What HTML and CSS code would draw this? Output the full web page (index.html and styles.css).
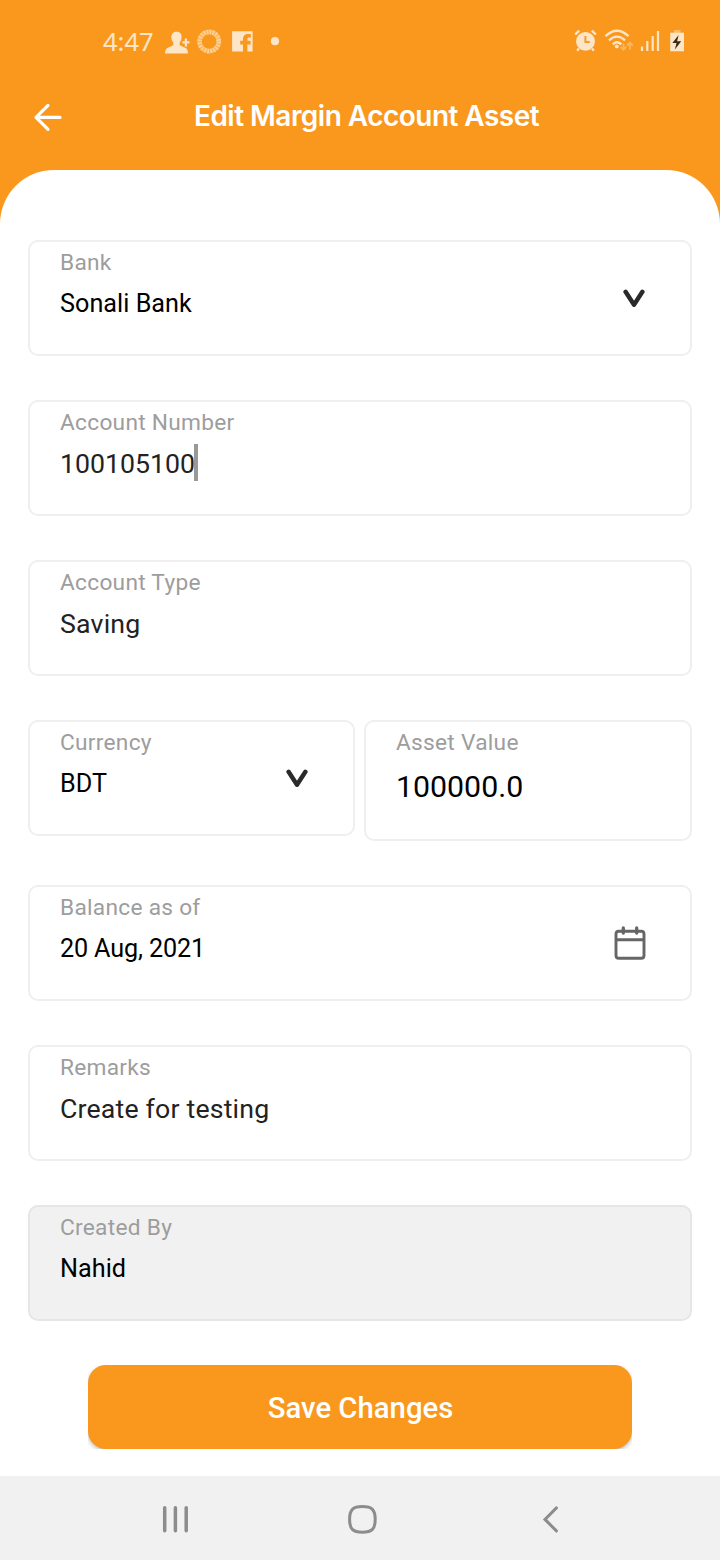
FILE: index.html
```html
<!DOCTYPE html>
<html lang="en">
<head>
<meta charset="utf-8">
<title>Edit Margin Account Asset</title>
<link rel="stylesheet" href="styles.css">
</head>
<body>
<div class="screen">
  <div class="status">
    <span class="clock">4:47</span>
    <svg class="status-left" width="126" height="36" viewBox="0 0 126 36">
      <g fill="#fde5c8">
        <path d="M11.500 7.800c3.800 0 5.500 2.600 5 6.400-.2 2-1 3.300-1.800 4.300v2.700l5.500 2.600c2 .9 2.600 2.300 2.800 5.600H0c.2-3.300.9-4.700 2.800-5.600l5.500-2.600v-2.700c-.9-1-1.600-2.300-1.800-4.300-.4-3.800 1.200-6.400 5-6.400z"/>
        <path d="M19.800 14.600h2.200v2.700h2.400v2.200H22v2.900h-2.200v-2.900h-2.400v-2.200h2.400z"/>
        <path fill-rule="evenodd" d="M67.100 7.300h20.500v20.300h-5.200v-7h3.200v-3.900h-3.200v-1.500c0-1.300.5-1.800 1.700-1.800h1.800V9.900h-3c-3 0-4.900 1.800-4.900 4.700v2.100h-2.800v3.900h2.800v7H67.100z"/>
        <circle cx="110" cy="17.200" r="4.100"/>
      </g>
      <circle cx="44.200" cy="17.500" r="9.600" fill="none" stroke="#fbb254" stroke-width="4.600"/>
      <circle cx="44.200" cy="17.500" r="9.600" fill="none" stroke="#fdd096" stroke-width="4.600" stroke-dasharray="1.900 1.116"/>
    </svg>
    <svg class="status-right" width="114" height="36" viewBox="572 24 114 36">
      <circle cx="585.500" cy="41.400" r="9.400" fill="#fde5c8"/>
      <path d="M575.200 34.500l4-3.800M591.800 30.700l4 3.800M579 48.500l-1.800 2.200M592 48.500l1.800 2.200" stroke="#fde5c8" stroke-width="2.400" fill="none"/>
      <path d="M585.400 36v6h4.400" stroke="#f99a2a" stroke-width="2" fill="none"/>
      <g fill="none" stroke="#fde5c8" stroke-width="2.300">
        <path d="M605.500 36.200q11.500-11 23 0M609 40.400q8-7.600 16 0M612.700 44.300q4.300-4 8.600 0"/>
      </g>
      <circle cx="616.800" cy="46.400" r="1.900" fill="#fde5c8"/>
      <path d="M623.500 43.500v6M620.700 46.900l2.800 2.900 2.800-2.900M630 49.500v-6.500M627.200 45.500l2.800-2.900 2.800 2.900" fill="none" stroke="#fcb560" stroke-width="1.800"/>
      <path d="M642 46.500v4.500M647.300 45v6M647.300 45v-4M652.700 36v15M658 31v20" stroke="#fde5c8" stroke-width="2.200" fill="none"/>
      <path d="M674 30h6.500v3H674z" fill="#fcbb68"/>
      <path d="M670.200 32.700H684v18.600h-13.800z" fill="#fde5c8"/>
      <path d="M678.600 35l-6.200 8h4.100l-1.600 6.400 6.300-8.200h-4.100z" fill="#3f2b12"/>
    </svg>
  </div>
  <header class="appbar">
    <svg class="back" width="30" height="30" viewBox="0 0 30 30"><path d="M16 3.400L4 15.400l12 12M4 15.400h24" fill="none" stroke="#fff" stroke-width="3.200" stroke-linecap="round" stroke-linejoin="round"/></svg>
    <h1 class="title">Edit Margin Account Asset</h1>
  </header>
  <main class="sheet">
    <section class="card">
      <div class="text"><div class="label">Bank</div><div class="value">Sonali Bank</div></div>
      <svg class="chev" width="24" height="20" viewBox="0 0 24 20"><path d="M3.600 2.800L12 15.800 20.400 2.800" fill="none" stroke="#2a2a2a" stroke-width="4.400" stroke-linecap="round" stroke-linejoin="round"/></svg>
    </section>
    <section class="card">
      <div class="text"><div class="label">Account Number</div><div class="value input number">100105100<i class="caret"></i></div></div>
    </section>
    <section class="card">
      <div class="text"><div class="label">Account Type</div><div class="value input">Saving</div></div>
    </section>
    <div class="row">
      <section class="card">
        <div class="text"><div class="label">Currency</div><div class="value">BDT</div></div>
        <svg class="chev" width="24" height="20" viewBox="0 0 24 20"><path d="M3.600 2.800L12 15.800 20.400 2.800" fill="none" stroke="#2a2a2a" stroke-width="4.400" stroke-linecap="round" stroke-linejoin="round"/></svg>
      </section>
      <section class="card tall">
        <div class="text"><div class="label">Asset Value</div><div class="value amount">100000.0</div></div>
      </section>
    </div>
    <section class="card">
      <div class="text"><div class="label">Balance as of</div><div class="value date">20 Aug, 2021</div></div>
      <svg class="cal" width="32" height="36" viewBox="0 0 32 36"><path d="M4.800 6.200h22.400q2.800 0 2.800 2.800v21.500q0 2.800-2.800 2.800H4.800Q2 33.300 2 30.500V9q0-2.800 2.800-2.800zM2 14.800h28" fill="none" stroke="#666" stroke-width="2.900"/><path d="M9.300 3v5M22.700 3v5" stroke="#666" stroke-width="3.300" stroke-linecap="round"/></svg>
    </section>
    <section class="card">
      <div class="text"><div class="label">Remarks</div><div class="value input">Create for testing</div></div>
    </section>
    <section class="card disabled">
      <div class="text"><div class="label">Created By</div><div class="value">Nahid</div></div>
    </section>
    <div class="save-wrap"><button class="save">Save Changes</button></div>
  </main>
  <nav class="nav">
    <svg width="28" height="28" viewBox="0 0 28 28"><path d="M3.700 2.800v23M14.400 2.800v23M25.200 2.800v23" stroke="#8c8c8c" stroke-width="3.500" stroke-linecap="round"/></svg>
    <svg class="home" width="30" height="30" viewBox="0 0 30 30"><path d="M15.400 2.600c9.600 0 12.800 3.200 12.800 12.800S25 28.200 15.400 28.200 2.600 25 2.600 15.400 5.800 2.600 15.400 2.600z" fill="none" stroke="#8c8c8c" stroke-width="3"/></svg>
    <svg width="18" height="28" viewBox="0 0 18 28"><path d="M15.400 2.900L4 14.400l11.400 11.500" fill="none" stroke="#8c8c8c" stroke-width="3" stroke-linecap="round"/></svg>
  </nav>
</div>
</body>
</html>
```
FILE: styles.css
```css
* { box-sizing: border-box; }
body { margin: 0; font-family: Roboto, "Liberation Sans", sans-serif; }
.screen { width: 720px; height: 1560px; display: flex; flex-direction: column; background: #fa981d; overflow: hidden; }
.status { height: 84px; display: flex; align-items: flex-start; padding: 24px 34px 0 103px; color: #fde5c8; }
.clock { width: 62px; margin-top: -1px; font-family: "Noto Sans", sans-serif; font-size: 25.5px; line-height: 36px; white-space: nowrap; }
.status-right { margin-left: auto; }
.appbar { height: 86px; display: flex; align-items: flex-start; padding: 16px 0 0 32px; }
.back { margin-top: 2px; }
.title { margin: 0 0 0 132px; font-family: Inter, sans-serif; font-size: 28px; line-height: 32px; font-weight: 600; letter-spacing: -0.53px; color: #fff; white-space: nowrap; }
.sheet { flex: 1; background: #fff; border-radius: 54px 54px 0 0; padding: 70px 28px 0; display: flex; flex-direction: column; gap: 44px; }
.card { height: 116px; border: 2px solid #efefef; border-radius: 10px; padding: 7px 44px 0 30px; display: flex; justify-content: space-between; }
.card.tall { height: 121px; }
.row { display: grid; grid-template-columns: 327px 328px; column-gap: 9px; align-items: start; }
.label { font-size: 22.7px; line-height: 28px; letter-spacing: 0.28px; color: #9d9d9d; white-space: nowrap; }
.value { margin-top: 9px; font-size: 25.2px; line-height: 36px; letter-spacing: 0.03px; color: #000; white-space: nowrap; }
.value.date { letter-spacing: -0.15px; }
.value.input { font-size: 26.7px; letter-spacing: 0.18px; color: #222; }
.value.number { letter-spacing: 0; }
.value.amount { font-size: 30.3px; margin-top: 12px; letter-spacing: 0; }
.number { display: flex; }
.caret { width: 4px; height: 37px; margin: -2px 0 0 -1px; background: #999; }
.chev { margin-top: 40px; }
.cal { margin-top: 31px; }
.disabled { background: #f1f1f1; border-color: #e6e6e6; }
.save-wrap { height: 84px; margin: 0 60px; overflow: hidden; }
.save { display: block; width: 100%; height: 84px; border: 0; padding: 2px 0 0 1px; border-radius: 18px; background: #fa981d; color: #fff; font-family: Roboto, sans-serif; font-size: 29.3px; font-weight: 500; letter-spacing: 0; box-shadow: 0 2px 4px rgba(0,0,0,.25); }
.nav { height: 84px; background: #f1f1f1; display: flex; align-items: center; justify-content: space-between; padding: 2px 161px 0 161px; }
.home { margin-right: 6px; }
```
